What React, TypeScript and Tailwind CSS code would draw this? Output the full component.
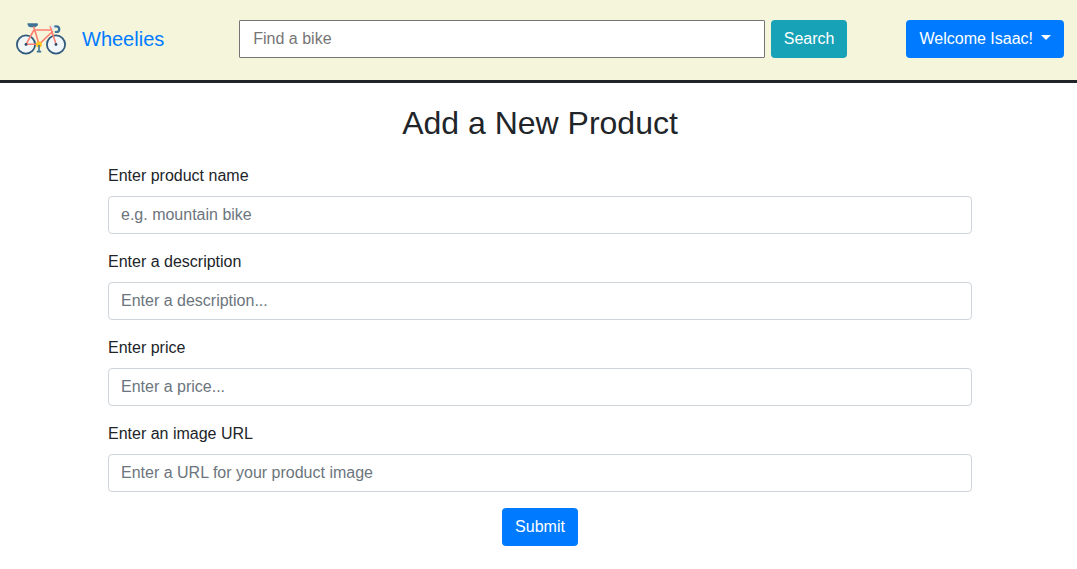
import React from "react";

interface Field {
  id: string;
  label: string;
  placeholder: string;
}

const fields: Field[] = [
  { id: "name", label: "Enter product name", placeholder: "e.g. mountain bike" },
  { id: "description", label: "Enter a description", placeholder: "Enter a description..." },
  { id: "price", label: "Enter price", placeholder: "Enter a price..." },
  { id: "image", label: "Enter an image URL", placeholder: "Enter a URL for your product image" },
];

function BikeLogo() {
  return (
    <svg className="h-[34px] w-[50px] shrink-0" viewBox="0 0 50 34" fill="none" aria-hidden="true">
      <g fill="#f1f6f8" stroke="#2f5a7c" strokeWidth="1.8">
        <circle cx="10" cy="22.5" r="9.1" />
        <circle cx="40" cy="22.5" r="9.1" />
      </g>
      <path d="M11.4 1.2H21.4C22.4 1.8 22.2 3.8 20.8 4.1L19.4 5.3H15C12.6 5 11.5 3.7 11.4 1.2Z" fill="#3f7396" />
      <path d="M17.8 5L23 22.3H10L18 8M18 8H35M36.5 9.5L23 22.3M34.3 4.5L40 22.3" stroke="#ff7f70" strokeWidth="1.6" strokeLinejoin="round" strokeLinecap="round" />
      <path d="M34.8 4.4H37.6V8.6" stroke="#dcebf5" strokeWidth="2" />
      <path d="M38.4 4.4H40.4C44.2 4.4 44.2 10 40.4 10H38.8" stroke="#3f7396" strokeWidth="2.2" />
      <circle cx="23" cy="22.5" r="2.9" fill="#ffc41f" />
      <path d="M23 23V29M20.8 29.6H25.2" stroke="#3f7396" strokeWidth="1.6" />
      <circle cx="10" cy="22.5" r="1.4" fill="#2d4f6b" />
      <circle cx="40" cy="22.5" r="1.4" fill="#2d4f6b" />
    </svg>
  );
}

export default function App() {
  return (
    <div className="min-h-screen bg-white font-['Liberation_Sans',Arial,sans-serif] text-base text-[#212529]">
      <header className="flex items-center border-b-3 border-[#212529] bg-[#f5f5dc] pt-5 pr-[13px] pb-[22px] pl-4">
        <a href="#" className="flex items-center gap-4 text-xl text-[#007bff]">
          <BikeLogo />
          Wheelies
        </a>
        <form className="mr-[59px] ml-[75px] flex flex-1 gap-1.5" onSubmit={(e) => e.preventDefault()}>
          <input
            type="search"
            aria-label="Find a bike"
            placeholder="Find a bike"
            className="h-[38px] min-w-0 flex-1 rounded-[1px] border border-[#767676] bg-white px-[13px] placeholder:text-[#757575]"
          />
          <button type="submit" className="h-[38px] rounded bg-[#17a2b8] px-[13px] text-white">
            Search
          </button>
        </form>
        <button type="button" className="flex h-[38px] items-center gap-2 rounded bg-[#007bff] px-[13px] text-white">
          Welcome Isaac!
          <svg className="mb-1 h-[5px] w-[10px]" viewBox="0 0 10 5" fill="currentColor" aria-hidden="true">
            <path d="M0 0H10L5 5Z" />
          </svg>
        </button>
      </header>

      <main className="mr-[105px] ml-[108px] pt-[21px]">
        <h1 className="text-center text-[32px] leading-[38px]">Add a New Product</h1>
        <form className="mt-[22px] flex flex-col gap-4" onSubmit={(e) => e.preventDefault()}>
          {fields.map((field) => (
            <div key={field.id} className="flex flex-col gap-2">
              <label htmlFor={field.id}>{field.label}</label>
              <input
                id={field.id}
                type="text"
                placeholder={field.placeholder}
                className="h-[38px] w-full rounded border border-[#ced4da] bg-white px-3 placeholder:text-[#6c757d]"
              />
            </div>
          ))}
          <button type="submit" className="h-[38px] self-center rounded bg-[#007bff] px-[13px] text-white">
            Submit
          </button>
        </form>
      </main>
    </div>
  );
}
